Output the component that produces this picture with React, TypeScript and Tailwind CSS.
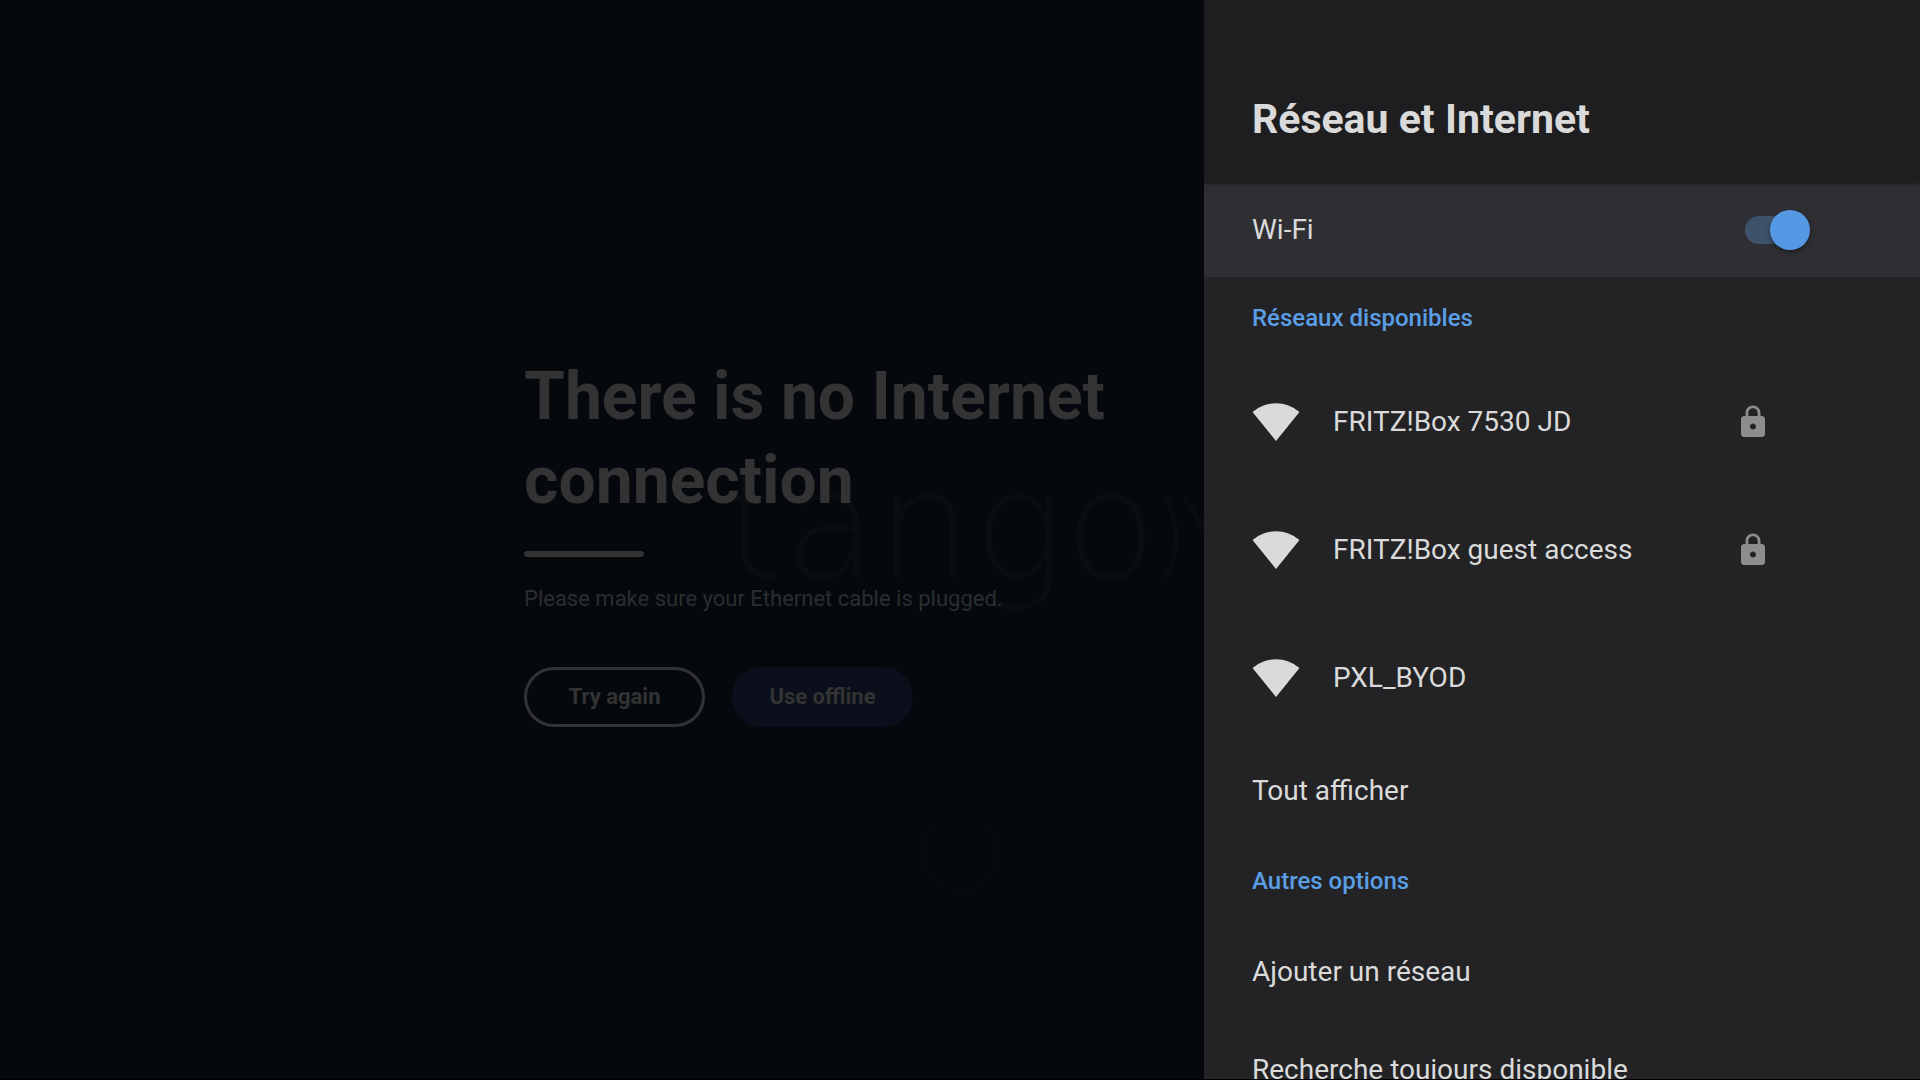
import React, { useState } from 'react';

const networks = [
  { name: 'FRITZ!Box 7530 JD', locked: true },
  { name: 'FRITZ!Box guest access', locked: true },
  { name: 'PXL_BYOD', locked: false },
];

const WifiIcon = () => (
  <svg viewBox="0 0 48 40" className="h-10 w-12 shrink-0 fill-[#dadada]" aria-hidden="true">
    <path d="M.5 10A36 36 0 0 1 47.5 10L24 39Z" />
  </svg>
);

const LockIcon = () => (
  <svg viewBox="0 0 24 24" className="size-9 shrink-0 fill-[#8d8d8f]" role="img" aria-label="Sécurisé">
    <path d="M18 8h-1V6c0-2.760-2.240-5-5-5S7 3.240 7 6v2H6c-1.100 0-2 .9-2 2v10c0 1.100.9 2 2 2h12c1.100 0 2-.9 2-2V10c0-1.100-.9-2-2-2zm-6 9c-1.100 0-2-.9-2-2s.9-2 2-2 2 .9 2 2-.9 2-2 2zm3.100-9H8.900V6c0-1.710 1.390-3.100 3.100-3.100s3.100 1.390 3.100 3.100v2z" />
  </svg>
);

const Backdrop = () => (
  <div className="pointer-events-none absolute inset-0 overflow-hidden" aria-hidden="true">
    <div className="absolute left-[724px] top-[436px] font-['DejaVu_Sans',sans-serif] text-[152px] leading-[180px] font-extralight text-[#090d10]">
      tango
    </div>
    <svg viewBox="0 0 60 100" className="absolute left-[1156px] top-[490px] h-[100px] w-[60px] fill-none stroke-[#090d10] stroke-[5]">
      <path d="M10 8Q30 48 10 88M28 6L48 40" />
    </svg>
    <div className="absolute left-[921px] top-[812px] size-20 rounded-full border-3 border-[#070b0f] border-t-transparent" />
  </div>
);

const NoConnection = () => (
  <main className="relative flex flex-1 flex-col justify-center overflow-hidden bg-[#05090d] pt-0.5 pl-[524px] text-[#323332]">
    <Backdrop />
    <div className="relative">
      <h1 className="text-[66px] leading-[84px] font-bold">
        There is no Internet
        <br />
        connection
      </h1>
      <div className="mt-7 h-[6px] w-[120px] rounded-full bg-[#323332]" />
      <p className="mt-[26px] text-[22px] leading-8 text-[#2b2e2e]">Please make sure your Ethernet cable is plugged.</p>
      <div className="mt-[52px] flex gap-[27px] text-[22px] font-bold">
        <button type="button" className="h-[60px] w-[181px] rounded-full border-3 border-[#323332]">
          Try again
        </button>
        <button type="button" className="h-[60px] w-[181px] rounded-full bg-[#0b0f1b]">
          Use offline
        </button>
      </div>
    </div>
  </main>
);

const SectionTitle = ({ children }: { children: React.ReactNode }) => (
  <h3 className="flex h-[81px] items-center px-12 text-2xl font-medium text-[#5a9ee6]">{children}</h3>
);

const Item = ({ children }: { children: React.ReactNode }) => (
  <button type="button" className="flex h-[98px] w-full items-center px-12 text-left">
    {children}
  </button>
);

const SettingsPanel = () => {
  const [wifi, setWifi] = useState(true);

  return (
    <aside className="h-full w-[716px] shrink-0 overflow-hidden bg-[#232325] text-[28px] text-[#dadada]">
      <header className="relative flex h-[183px] items-end bg-[#1e1e20] px-12 pb-10 shadow-[0_1px_3px_rgba(0,0,0,0.4)]">
        <h2 className="text-[41px] leading-12 font-bold">Réseau et Internet</h2>
      </header>

      <label className="flex h-[94px] items-center justify-between bg-[#2f2f33] pr-[110px] pl-12">
        Wi-Fi
        <span className="relative flex h-10 w-[65px] items-center">
          <input
            type="checkbox"
            role="switch"
            checked={wifi}
            onChange={(e) => setWifi(e.target.checked)}
            className="peer h-7 w-[60px] appearance-none rounded-full bg-[#55555a] checked:bg-[#3d526b]"
          />
          <span className="pointer-events-none absolute left-0 size-10 rounded-full bg-[#aaaaaa] shadow-[0_2px_4px_rgba(0,0,0,0.4)] peer-checked:right-0 peer-checked:left-auto peer-checked:bg-[#5599e4]" />
        </span>
      </label>

      <SectionTitle>Réseaux disponibles</SectionTitle>
      {networks.map((n) => (
        <button key={n.name} type="button" className="flex h-32 w-full items-center pr-[149px] pl-12 text-left">
          <WifiIcon />
          <span className="ml-[33px] flex-1">{n.name}</span>
          {n.locked && <LockIcon />}
        </button>
      ))}
      <Item>Tout afficher</Item>

      <SectionTitle>Autres options</SectionTitle>
      <div className="pt-0.5">
        <Item>Ajouter un réseau</Item>
        <Item>Recherche toujours disponible</Item>
      </div>
    </aside>
  );
};

const App = () => (
  <div className="flex h-screen overflow-hidden border-b border-black bg-[#05090d] font-['Roboto',sans-serif]">
    <NoConnection />
    <SettingsPanel />
  </div>
);

export default App;
